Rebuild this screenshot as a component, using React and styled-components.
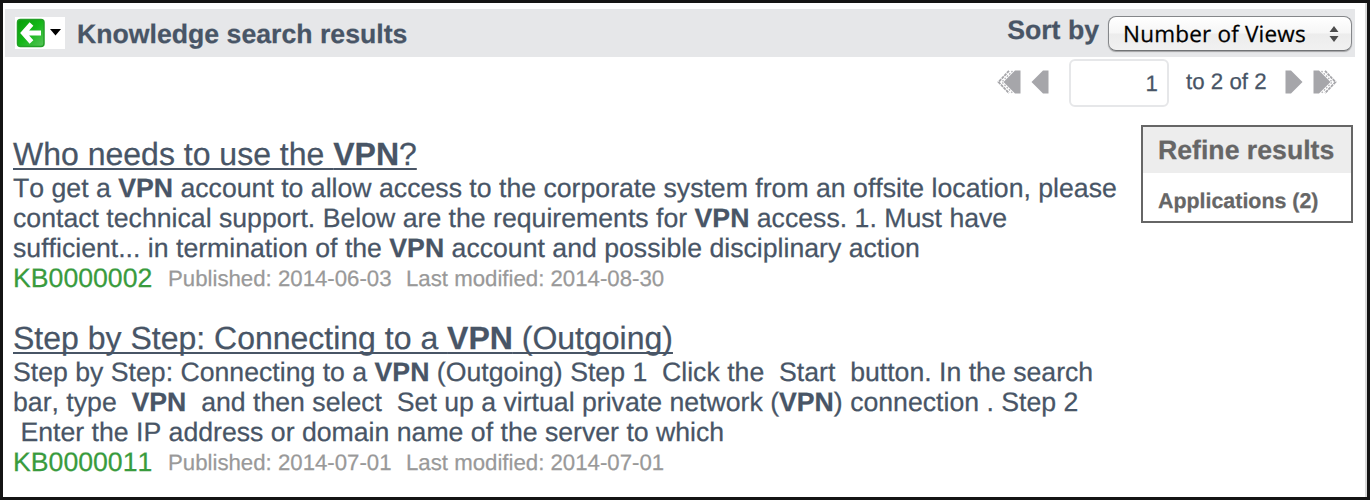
import React from "react";
import styled, { createGlobalStyle } from "styled-components";

const Global = createGlobalStyle`
  * { box-sizing: border-box; }
  body {
    margin: 0;
    background: #fff;
    color: #485566;
    font-family: "Liberation Sans", Arial, sans-serif;
    font-kerning: none;
    text-rendering: geometricPrecision;
    -webkit-text-stroke: 0.25px currentColor;
  }
`;

const Window = styled.div`
  width: 1370px;
  height: 500px;
  overflow: hidden;
  border: 3px solid #141414;
  background: #fff;
  padding: 6px 12px 0 2px;
  box-shadow: inset -2px 0 0 #d9d9d9;
`;

const Header = styled.header`
  display: flex;
  align-items: flex-start;
  height: 48px;
  padding: 0 3px 0 10px;
  background: #e6e7e9;
`;

const BackButton = styled.button`
  display: flex;
  align-items: center;
  gap: 5px;
  width: 50px;
  height: 32px;
  margin: 8px 12px 0 0;
  padding: 0 0 0 1px;
  border: 0;
  background: #fff;
`;

const Caret = styled.svg`
  margin-top: -2px;
`;

const HeaderText = styled.span`
  font-size: 26.67px;
  font-weight: bold;
  line-height: 30px;
  white-space: nowrap;
  margin-top: ${(p) => p.$top}px;
`;

const SortGroup = styled.div`
  display: flex;
  margin-left: auto;
`;

const Select = styled.div`
  display: flex;
  align-items: center;
  justify-content: space-between;
  width: 244px;
  height: 35px;
  margin: 7px 0 0 9px;
  padding: 0 12px 0 14px;
  border: 1px solid #85878a;
  border-bottom-color: #717375;
  border-radius: 8px;
  background: linear-gradient(#fff 0%, #f6f6f6 49%, #ececec 51%, #f1f1f1 100%);
  box-shadow: 0 1px 1px rgba(0, 0, 0, 0.3);
  color: #000;
  font: 22.5px/33px "Open Sans", "Noto Sans", sans-serif;
  white-space: nowrap;
`;

const SelectLabel = styled.span`
  letter-spacing: 0.2px;
`;

const Pager = styled.nav`
  display: flex;
  align-items: center;
  height: 49px;
  margin: 1px 18px 0 0;
  justify-content: flex-end;
  font-size: 22.3px;
`;

const PageInput = styled.div`
  width: 100px;
  height: 48px;
  margin: 0 17px 0 20px;
  padding: 0 9px 0 0;
  border: 2px solid #e6e7e9;
  border-radius: 6px;
  line-height: 46px;
  text-align: right;
`;

const PageRange = styled.span`
  width: 81px;
  margin-right: 18px;
  white-space: nowrap;
  line-height: 30px;
  margin-top: -2px;
`;

const PageArrow = styled.svg`
  display: block;
  flex: none;
  margin-top: -2px;
  margin-left: ${(p) => p.$gap || 0}px;
`;

const Content = styled.main`
  display: flex;
  justify-content: space-between;
  align-items: flex-start;
  margin: 18px 2px 0 8px;
`;

const Results = styled.div`
  padding-top: 10px;
`;

const Result = styled.article`
  margin-bottom: 26px;
`;

const Title = styled.h2`
  margin: 0;
  font-size: 32px;
  font-weight: normal;
  line-height: 38px;
  white-space: nowrap;
`;

const TitleLink = styled.a`
  text-decoration: underline;
  text-decoration-thickness: 2px;
  text-underline-offset: 3px;
  text-decoration-skip-ink: none;
`;

const Line = styled.div`
  height: 30px;
  font-size: 26.67px;
  line-height: 30px;
  white-space: pre;
`;

const Meta = styled.div`
  display: flex;
  height: 30px;
  line-height: 30px;
  white-space: nowrap;
`;

const Number = styled.span`
  width: 155px;
  color: #399b3d;
  font-size: 26.67px;
`;

const MetaDate = styled.span`
  width: ${(p) => p.$width}px;
  color: #999;
  font-size: 22.22px;
  line-height: 32px;
`;

const Refine = styled.aside`
  width: 212px;
  height: 98px;
  border: 2px solid #666;
  color: #666;
  font-weight: bold;
  white-space: nowrap;
`;

const RefineTitle = styled.div`
  height: 46px;
  padding-left: 15px;
  background: #ededed;
  font-size: 26.67px;
  line-height: 46px;
`;

const RefineItem = styled.div`
  padding-left: 15px;
  font-size: 21.4px;
  line-height: 57px;
`;

const BackIcon = () => (
  <svg width="29" height="30" viewBox="0 0 29 30">
    <defs>
      <linearGradient id="green" x1="0" y1="0" x2="1" y2="1">
        <stop offset="0" stopColor="#079b08" />
        <stop offset="0.5" stopColor="#14b818" />
        <stop offset="1" stopColor="#5bc45d" />
      </linearGradient>
    </defs>
    <rect x="1.5" y="1.5" width="26.5" height="27" rx="3" fill="url(#green)" stroke="#23a027" strokeWidth="1.5" />
    <path d="M25 15H8M15.500 6L7.500 15L15.500 24" fill="none" stroke="#fff" strokeWidth="5" />
  </svg>
);

const Single = ({ flip, gap }) => (
  <PageArrow $gap={gap} width="18" height="24" viewBox="0 0 18 24">
    <path transform={flip ? "translate(18 0) scale(-1 1)" : undefined} d="M17.500 0.5V23.5H12L0.500 12L12 0.5Z" fill="#a6a6aa" />
  </PageArrow>
);

const Double = ({ flip, gap }) => (
  <PageArrow $gap={gap} width="24" height="24" viewBox="0 0 24 24">
    <g transform={flip ? "translate(24 0) scale(-1 1)" : undefined}>
      <path d="M23.500 0.5V23.5H18L6.500 12L18 0.5Z" fill="#a6a6aa" />
      <path d="M12 0.8L1.500 12L12 23.200" fill="none" stroke="#a6a6aa" strokeWidth="1.800" strokeDasharray="3 0.800" />
      <path d="M15.500 1L4.800 12L15.500 23" fill="none" stroke="#b4b4b8" strokeWidth="1.400" strokeDasharray="1.600 1.600" />
    </g>
  </PageArrow>
);

const Vpn = () => <b>VPN</b>;

export default function App() {
  return (
    <Window>
      <Global />
      <Header>
        <BackButton aria-label="Back">
          <BackIcon />
          <Caret width="11" height="7" viewBox="0 0 11 7"><path d="M0 0H11L5.500 6.500Z" fill="#000" /></Caret>
        </BackButton>
        <HeaderText $top={10}>Knowledge search results</HeaderText>
        <SortGroup>
          <HeaderText $top={6}>Sort by</HeaderText>
          <Select>
            <SelectLabel>Number of Views</SelectLabel>
            <svg width="10" height="16" viewBox="0 0 10 16"><path d="M0.500 6L5 0L9.500 6ZM0.500 10L5 16L9.500 10Z" fill="#4c4c4c" /></svg>
          </Select>
        </SortGroup>
      </Header>
      <Pager>
        <Double />
        <Single gap={10} />
        <PageInput>1</PageInput>
        <PageRange>to 2 of 2</PageRange>
        <Single flip />
        <Double flip gap={10} />
      </Pager>
      <Content>
        <Results>
          <Result>
            <Title><TitleLink>Who needs to use the <Vpn />?</TitleLink></Title>
            <Line>To get a <Vpn /> account to allow access to the corporate system from an offsite location, please</Line>
            <Line>contact technical support. Below are the requirements for <Vpn /> access. 1. Must have</Line>
            <Line>sufficient... in termination of the <Vpn /> account and possible disciplinary action</Line>
            <Meta>
              <Number>KB0000002</Number>
              <MetaDate $width={238}>Published: 2014-06-03</MetaDate>
              <MetaDate $width={260}>Last modified: 2014-08-30</MetaDate>
            </Meta>
          </Result>
          <Result>
            <Title><TitleLink>Step by Step: Connecting to a <Vpn /> (Outgoing)</TitleLink></Title>
            <Line>Step by Step: Connecting to a <Vpn /> (Outgoing) Step 1  Click the  Start  button. In the search</Line>
            <Line>bar, type  <Vpn />  and then select  Set up a virtual private network (<Vpn />) connection . Step 2</Line>
            <Line> Enter the IP address or domain name of the server to which</Line>
            <Meta>
              <Number>KB0000011</Number>
              <MetaDate $width={238}>Published: 2014-07-01</MetaDate>
              <MetaDate $width={260}>Last modified: 2014-07-01</MetaDate>
            </Meta>
          </Result>
        </Results>
        <Refine>
          <RefineTitle>Refine results</RefineTitle>
          <RefineItem>Applications (2)</RefineItem>
        </Refine>
      </Content>
    </Window>
  );
}
